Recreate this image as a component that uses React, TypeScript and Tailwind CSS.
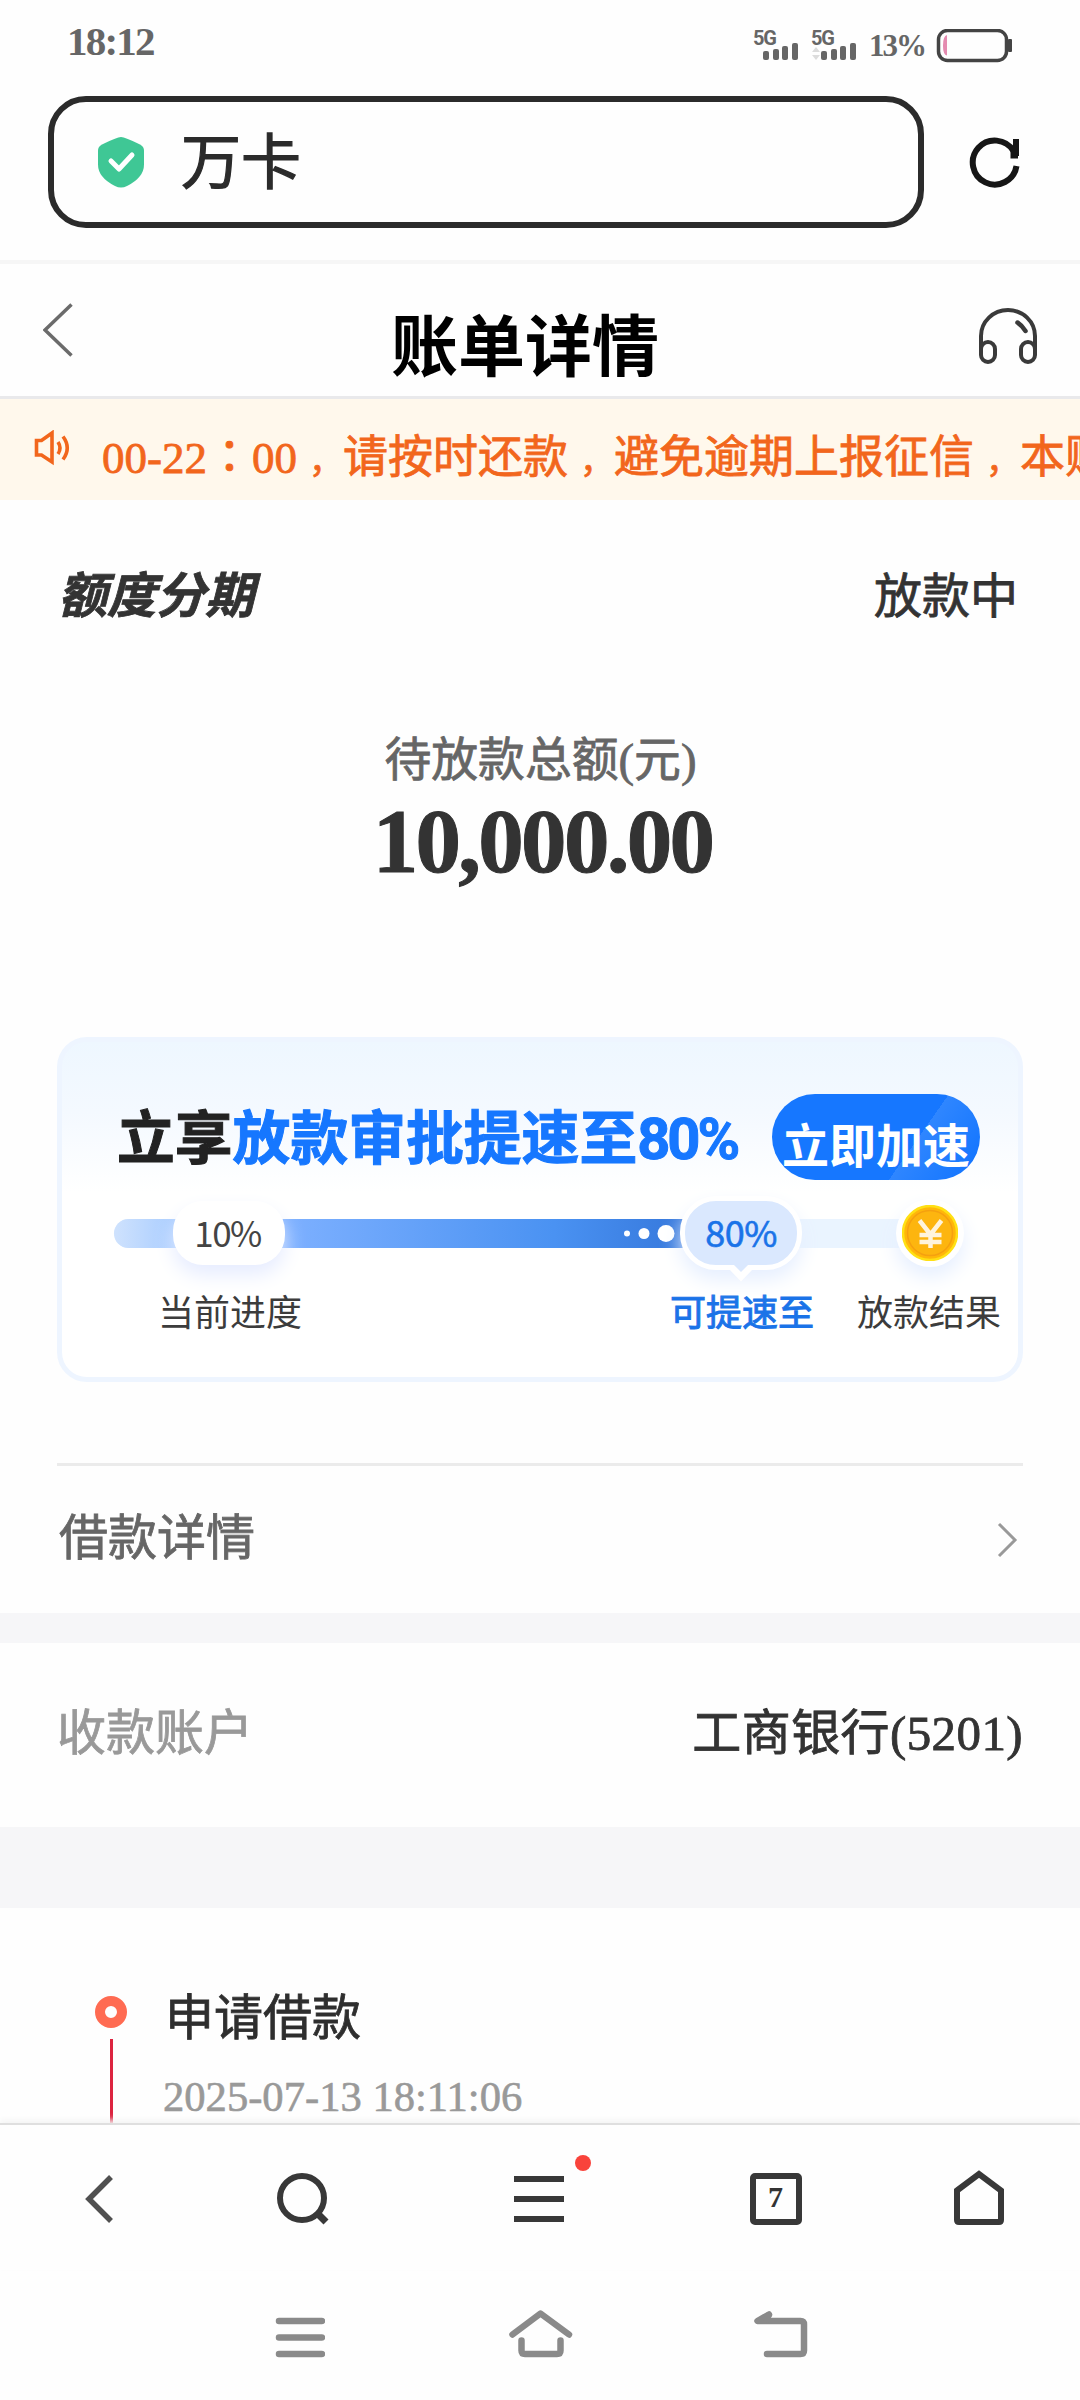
import type { ReactNode } from 'react'

const SERIF = 'font-["Liberation_Serif","Noto_Sans_CJK_SC",serif]'
const SANS = 'font-["Noto_Sans_CJK_SC",sans-serif]'

function Signal({ data = false }: { data?: boolean }) {
  return (
    <svg width="46" height="44" viewBox="0 -8 46 44" className="shrink-0">
      <text x="0" y="15.5" fontFamily="Roboto, sans-serif" fontWeight="700" fontSize="20" textLength="24" fill="#666">
        5G
      </text>
      {data && <path d="M1 23l4-5 4 5zM1 26l4 5 4-5z" fill="#dcdcdc" />}
      <g fill="#666">
        <rect x="10" y="22" width="6" height="9" rx="2" />
        <rect x="20" y="20" width="6" height="11" rx="2" />
        <rect x="29" y="17" width="6" height="14" rx="2" />
        <rect x="39" y="14" width="6" height="17" rx="2" />
      </g>
    </svg>
  )
}

function StatusBar() {
  return (
    <div className="flex h-24 items-start justify-between pl-[67px] pr-[66px] text-[#666]">
      <span className="mt-[19px] text-[41px] font-bold leading-[44px] tracking-[-1.800px]">18:12</span>
      <div className="mt-[21px] flex">
        <Signal />
        <span className="w-3" />
        <Signal data />
        <span className="ml-[12px] mt-[8px] w-[62px] text-[31px] font-bold leading-[34px] tracking-[-2px]">13%</span>
        <svg width="78" height="34" viewBox="0 0 78 34" className="ml-[4px] mr-px mt-[8px]">
          <rect x="3.5" y="1.5" width="68" height="30" rx="9" fill="none" stroke="#444" strokeWidth="3.5" />
          <path d="M12 6q-4 1-4 10.500t4 10z" fill="#e58bb0" />
          <rect x="73" y="10" width="4" height="13" rx="1" fill="#444" />
        </svg>
      </div>
    </div>
  )
}

function AddressBar() {
  return (
    <div className="flex h-[164px] items-start pl-12">
      <div className="flex h-[132px] w-[876px] items-center rounded-[38px] border-[6px] border-[#2b2b2b] pl-11">
        <svg width="46" height="52" viewBox="0 0 46 52">
          <path d="M23 1q4 0 19 7.500q4 2 4 6v14q0 13-17 21.500q-6 3-12 0Q0 41.500 0 28.500v-14q0-4 4-6Q19 1 23 1z" fill="#3fc795" />
          <path d="M13 25l8 8 13-14" fill="none" stroke="#fff" strokeWidth="5" strokeLinecap="round" strokeLinejoin="round" />
        </svg>
        <span className="ml-[37px] pt-[3px] text-[60px] leading-[80px] text-[#2b2b2b] [-webkit-text-stroke:1.2px]">万卡</span>
      </div>
      <svg width="52" height="52" viewBox="0 0 52 52" className="ml-[45px] mt-[40px]" fill="none" stroke="#161616" strokeWidth="6">
        <path d="M47.500 30A22 22 0 1 1 44.500 15" />
        <path d="M47 3v17" />
        <path d="M44 12v8h5" strokeWidth="5" />
      </svg>
    </div>
  )
}

function PageHeader() {
  return (
    <div className="flex h-[139px] items-start justify-between border-b-[3px] border-t-4 border-b-[#e9e9eb] border-t-[#f6f6f6] pl-[43px] pr-[43px]">
      <svg width="58" height="54" viewBox="0 0 58 54" className="mt-[39px]">
        <path d="M28.500 1.500L2 27l26.500 25.500" fill="none" stroke="#6b6b6b" strokeWidth="3.500" />
      </svg>
      <h1 className="mt-[44px] pr-[30px] text-[67px] font-bold leading-[80px] text-black">账单详情</h1>
      <svg width="58" height="56" viewBox="0 0 58 56" className="mt-[44px]" fill="none" stroke="#3a3a3a" strokeWidth="4">
        <path d="M2 47V28a27 26 0 0 1 54 0v19" />
        <rect x="2" y="34" width="14" height="20" rx="7" />
        <rect x="42" y="34" width="14" height="20" rx="7" />
        <path d="M38.500 14.500q4 2.500 8 8.500" strokeWidth="4.500" strokeLinecap="round" />
      </svg>
    </div>
  )
}

function Comma() {
  return <span className="pl-[12px] text-[34px] leading-none">，</span>
}

function Notice() {
  return (
    <div className="flex h-[101px] items-start overflow-hidden bg-[#fff8ec] text-[#f2661c]">
      <svg width="38" height="36" viewBox="0 0 38 36" className="ml-[34px] mt-[31px] shrink-0" fill="none" stroke="currentColor" strokeWidth="3.600">
        <path d="M2.500 10.500h5L18 3v29L7.500 25h-5z" />
        <path d="M24 12q4 6 0 12" />
        <path d="M29 6.500q8.500 11.500 0 23" />
      </svg>
      <p className="ml-[30px] mt-[32px] shrink-0 whitespace-nowrap text-[45px] leading-[52px] [-webkit-text-stroke:0.8px]">
        00-22<span className='font-["Noto_Sans_CJK_TC",sans-serif] leading-none'>：</span>00
        <Comma />
        请按时还款
        <Comma />
        避免逾期上报征信
        <Comma />
        本账单
      </p>
    </div>
  )
}

function Summary() {
  return (
    <>
      <div className="mt-[67px] flex h-[60px] justify-between pl-[58px] pr-[62px] text-[49px] leading-[60px] text-[#333]">
        <span className="font-bold italic [-webkit-text-stroke:0.8px]">额度分期</span>
        <span className="text-[48px] [-webkit-text-stroke:0.8px]">放款中</span>
      </div>
      <div className="mt-[103px] pl-px text-center text-[46.800px] leading-[60px] text-[#666] [-webkit-text-stroke:0.8px]">待放款总额(元)</div>
      <div className="mt-[2px] pl-[5px] text-center text-[91px] font-bold leading-[100px] tracking-[-2.700px] text-[#333] [-webkit-text-stroke:1px]">10,000.00</div>
    </>
  )
}

function Coin() {
  return (
    <svg width="56" height="56" viewBox="0 0 56 56">
      <circle cx="28" cy="28" r="27" fill="#ffb60a" stroke="#ffe014" strokeWidth="2.500" />
      <circle cx="28" cy="28" r="22.500" fill="#fdb50f" stroke="#f5a010" strokeWidth="1.500" />
      <path d="M17.500 15.500l11 14L39.500 15.500M28.500 29v14M17.500 30h22M17.500 37h22" fill="none" stroke="#fff4dc" strokeWidth="4.500" />
    </svg>
  )
}

function SpeedCard() {
  return (
    <div className="mx-[57px] mt-[145px] h-[345px] rounded-[30px] border-[5px] border-[#eef5ff] bg-[linear-gradient(#eef7ff_0px,#f4f9ff_70px,#ffffff_150px)]">
      <div className="flex h-[142px] pl-[53px] pt-[52px]">
        <h2 className="mt-[6px] w-[657px] shrink-0 whitespace-nowrap pl-[2px] text-[57.800px] font-bold leading-[80px] text-[#222] [-webkit-text-stroke:1px]">
          立享<span className="text-[#1677ff]">放款审批提速至<span className="font-[Roboto,sans-serif] leading-none tracking-[-3px]">80%</span></span>
        </h2>
        <div className="flex h-[86px] w-[208px] shrink-0 justify-center overflow-hidden rounded-full bg-[linear-gradient(125deg,#1677ff_66%,#2f86ff_66%,#1677ff_92%)]">
          <span className="whitespace-nowrap pt-[20px] text-[47px] font-bold leading-[66px] text-white">立即加速</span>
        </div>
      </div>
      <div className="relative ml-[52px] mt-[35px] h-[29px] w-[816px] rounded-full bg-[#eaf4ff]">
        <div className="h-full w-[580px] rounded-l-full bg-[linear-gradient(90deg,#cfe2fd_0px,#a9cdff_60px,#7db0ff_172px,#4a92f2_440px,#3678dc_570px)]" />
        <svg width="60" height="20" viewBox="0 0 60 20" className="absolute left-[508px] top-[4px]" fill="#fff">
          <circle cx="5" cy="10.500" r="3" />
          <circle cx="22" cy="10.500" r="5.500" />
          <circle cx="44" cy="10.500" r="8.500" />
        </svg>
        <div className={`absolute -top-[18px] left-[59px] h-[64px] w-[112px] rounded-[30px] bg-white pr-[3px] text-center text-[35px] leading-[61px] tracking-[-1.500px] text-[#444] shadow-[0_10px_20px_#e6ecff] ${SANS}`}>
          10%
        </div>
        <div className={`absolute -top-[23px] left-[566px] h-[74px] w-[122px] rounded-[36px] border-[5px] border-white bg-[#dae8fe] text-center text-[36px] leading-[61px] tracking-[-0.500px] text-[#1a73e8] shadow-[0_10px_20px_#e6efff] [-webkit-text-stroke:0.6px] ${SANS}`}>
          80%
          <svg width="24" height="17" viewBox="0 0 24 17" className="absolute -bottom-[17px] left-[44px]">
            <path d="M0 4L12 16.500 24 4V0H0z" fill="#fff" />
            <path d="M5 0h14l-7 7z" fill="#dae8fe" />
          </svg>
        </div>
        <div className="absolute -top-[20px] left-[782px] flex h-[68px] w-[68px] items-center justify-center rounded-full bg-white shadow-[0_10px_20px_#e6efff]">
          <Coin />
        </div>
      </div>
      <div className={`mt-[35px] flex h-[54px] pl-[96px] text-[36px] leading-[54px] text-[#3c3c3c] ${SANS}`}>
        <span className="w-[512px]">当前进度</span>
        <span className="w-[187px] text-[#1a73e8] [-webkit-text-stroke:1px]">可提速至</span>
        <span>放款结果</span>
      </div>
    </div>
  )
}

function Details() {
  return (
    <>
      <div className="mx-[57px] mt-[81px] flex h-[150px] items-start justify-between border-t-[3px] border-[#ebebeb]">
        <span className="mt-[43px] pl-[2px] text-[49px] leading-[60px] text-[#666] [-webkit-text-stroke:0.8px]">借款详情</span>
        <svg width="30" height="36" viewBox="0 0 30 36" className="mt-[56px]">
          <path d="M6 2l16 16L6 34" fill="none" stroke="#999" strokeWidth="3" />
        </svg>
      </div>
      <div className="h-[30px] bg-[#f6f6f8]" />
      <div className="flex h-[184px] items-center justify-between px-[57px] pb-[2px] text-[49px] leading-[60px] [-webkit-text-stroke:0.8px]">
        <span className="text-[#999]">收款账户</span>
        <span className="tracking-[0.400px] text-[#333]">工商银行(5201)</span>
      </div>
      <div className="h-[81px] bg-[#f6f6f8]" />
      <div className="flex pl-[95px] pt-[80px]">
        <div className="flex w-8 flex-col items-center">
          <span className="mt-2 h-8 w-8 shrink-0 rounded-full border-[10px] border-[#ff6b52]" />
          <span className="mt-[11px] h-[90px] w-[3px] shrink-0 bg-[#dc2440]" />
        </div>
        <div className="ml-[36px]">
          <p className="pl-[2px] pt-px text-[49px] leading-[60px] text-[#2e2e2e] [-webkit-text-stroke:0.8px]">申请借款</p>
          <p className="mt-[18px] text-[42.600px] leading-[60px] text-[#999] [-webkit-text-stroke:0.6px]">2025-07-13 18:11:06</p>
        </div>
      </div>
    </>
  )
}

function Slot({ children, width }: { children: ReactNode; width: string }) {
  return <div className={`flex justify-center ${width}`}>{children}</div>
}

function BrowserNav() {
  return (
    <nav className="flex h-[147px] items-center border-t-2 border-[#dfdfdf] bg-[#fefefe] pt-[2px] shadow-[0_-3px_6px_#f4f4f4]">
      <Slot width="w-[200px]">
        <svg width="30" height="50" viewBox="0 0 30 50">
          <path d="M26 3L4 25l22 22" fill="none" stroke="#505050" strokeWidth="5.500" />
        </svg>
      </Slot>
      <Slot width="w-[208px]">
        <svg width="54" height="56" viewBox="0 0 54 56" fill="none" stroke="#383838" strokeWidth="6">
          <circle cx="25" cy="27" r="22" />
          <path d="M40 42l9 9" strokeWidth="7" />
        </svg>
      </Slot>
      <Slot width="w-[262px]">
        <div className="relative">
          <svg width="50" height="50" viewBox="0 0 50 50" fill="none" stroke="#383838" strokeWidth="6">
            <path d="M0 5h50M0 25h50M0 45h50" />
          </svg>
          <span className="absolute -right-[27px] -top-[19px] h-4 w-4 rounded-full bg-[#f9433b]" />
        </div>
      </Slot>
      <Slot width="w-[211px]">
        <div className="flex h-[52px] w-[52px] items-center justify-center rounded-[5px] border-[6px] border-[#383838] pb-1 text-[30px] font-bold leading-none text-[#333]">
          7
        </div>
      </Slot>
      <Slot width="w-[196px]">
        <svg width="52" height="58" viewBox="0 0 52 58">
          <path d="M4 20.500L26 4l22 16.500V50q0 2-2 2H6q-2 0-2-2z" fill="none" stroke="#383838" strokeWidth="6" />
        </svg>
      </Slot>
    </nav>
  )
}

function SystemNav() {
  return (
    <div className="flex h-[130px] items-start pl-[275px] pt-[40px]">
      <svg width="50" height="50" viewBox="0 0 50 50" fill="none" stroke="#8a8a8a" strokeWidth="6.500" strokeLinecap="round">
        <path d="M4 11h43M4 27.500h43M4 44h43" />
      </svg>
      <svg width="64" height="54" viewBox="0 0 64 54" className="ml-[184px]" fill="none" stroke="#8a8a8a" strokeWidth="6.500" strokeLinecap="round" strokeLinejoin="round">
        <path d="M3.500 24.500L31.500 3.500 60 24.500" />
        <path d="M12.500 30.500v10q0 3.500 3.500 3.500h32q3.500 0 3.500-3.500v-10" />
      </svg>
      <svg width="54" height="54" viewBox="0 0 54 54" className="ml-[181px]" fill="none" stroke="#8a8a8a" strokeWidth="6.500" strokeLinecap="round" strokeLinejoin="round">
        <path d="M15 4.500L3.500 11h43q3.500 0 3.500 3.500v26q0 3.500-3.500 3.500H13" />
        <path d="M14.500 5.500l-2 4" />
      </svg>
    </div>
  )
}

export default function App() {
  return (
    <div className={`flex h-[2400px] w-[1080px] flex-col overflow-hidden bg-[#fefefe] ${SERIF}`}>
      <StatusBar />
      <AddressBar />
      <div className="h-[1863px] overflow-hidden">
        <PageHeader />
        <Notice />
        <Summary />
        <SpeedCard />
        <Details />
      </div>
      <BrowserNav />
      <SystemNav />
    </div>
  )
}
